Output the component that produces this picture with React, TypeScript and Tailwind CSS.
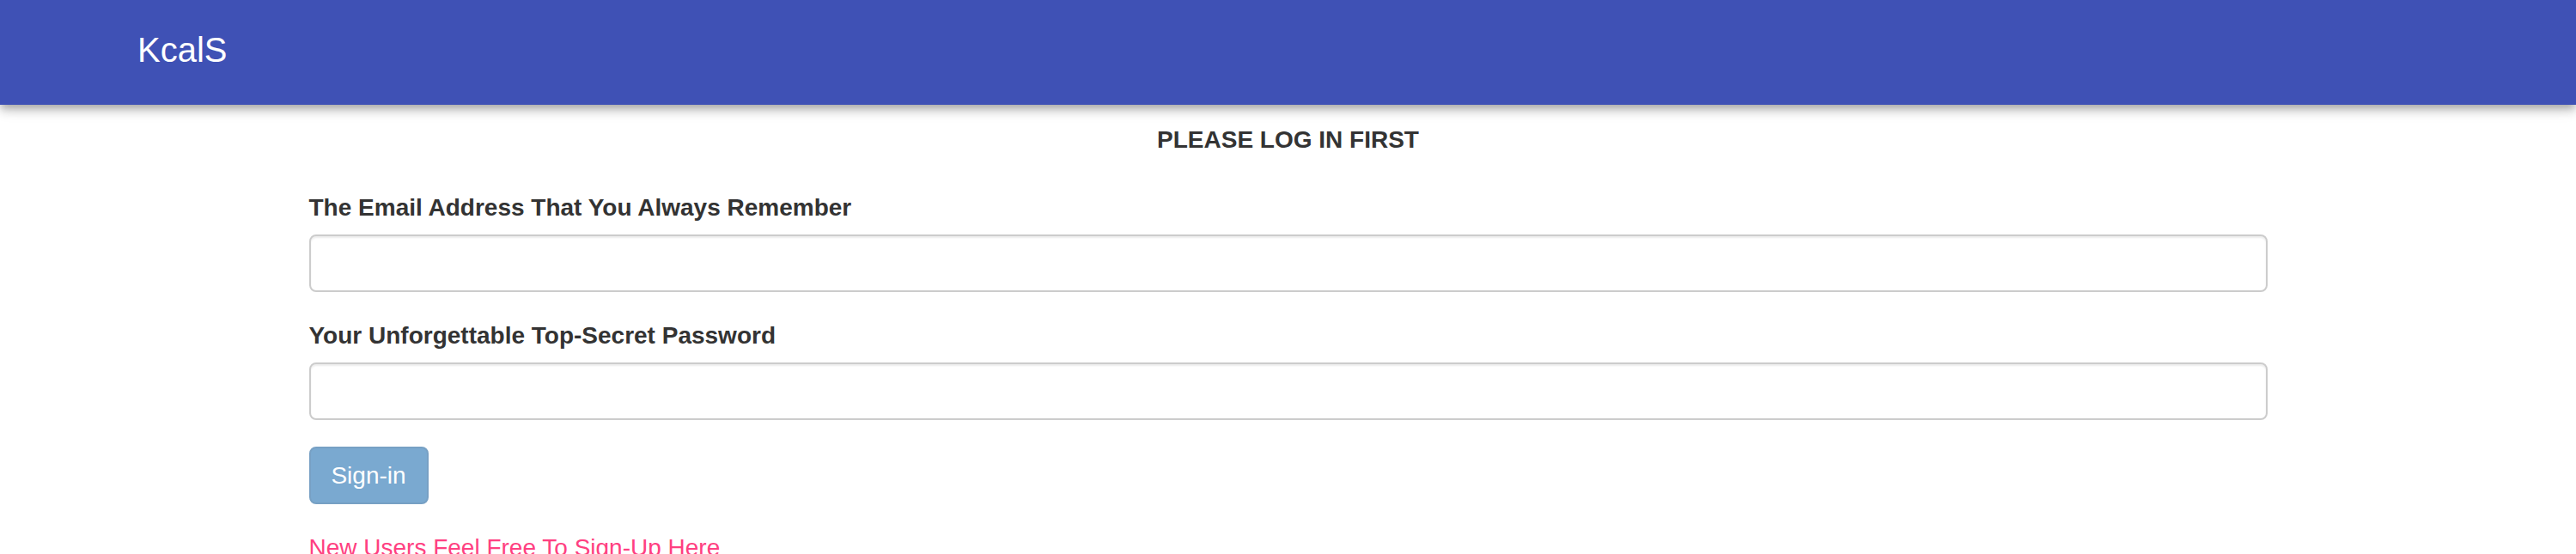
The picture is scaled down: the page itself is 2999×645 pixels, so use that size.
import React from "react";

export default function App() {
  return (
    <div
      className="min-h-[645px] bg-white text-[#333333]"
      style={{ fontFamily: '"Liberation Sans", Arial, Helvetica, sans-serif' }}
    >
      <header className="relative z-10 h-[122px] bg-[#3f51b5] pl-[160px] pt-[34px] shadow-[0_4px_8px_-2px_rgba(0,0,0,0.2),0_8px_10px_0_rgba(0,0,0,0.14),0_2px_20px_0_rgba(0,0,0,0.12)]">
        <span className="block text-[40px] leading-[48px] text-white">KcalS</span>
      </header>

      <main className="mx-auto w-[2280px] pt-[21px]">
        <h5 className="text-center text-[28px] font-bold leading-[40px] text-[#333333]">
          PLEASE LOG IN FIRST
        </h5>

        <form className="mt-[39px] flex flex-col">
          <div className="flex flex-col">
            <label className="mb-[11px] text-[28px] font-bold leading-[40px]">
              The Email Address That You Always Remember
            </label>
            <input
              type="email"
              className="h-[67px] w-full rounded-[8px] border-2 border-[#cccccc] bg-white px-[24px] text-[28px] shadow-[inset_0_2px_2px_rgba(0,0,0,0.075)] outline-none"
            />
          </div>

          <div className="mt-[31px] flex flex-col">
            <label className="mb-[11px] text-[28px] font-bold leading-[40px]">
              Your Unforgettable Top-Secret Password
            </label>
            <input
              type="password"
              className="h-[67px] w-full rounded-[8px] border-2 border-[#cccccc] bg-white px-[24px] text-[28px] shadow-[inset_0_2px_2px_rgba(0,0,0,0.075)] outline-none"
            />
          </div>

          <div className="mt-[31px]">
            <button
              type="button"
              disabled
              className="flex h-[67px] w-[139px] items-center justify-center rounded-[8px] border-2 border-[#77a0c4] bg-[#7aa9d0] text-[28px] leading-[40px] text-white"
            >
              Sign-in
            </button>
          </div>

          <div className="mt-[31px]">
            <a className="text-[28px] leading-[40px] text-[#ff4081]" href="#">
              New Users Feel Free To Sign-Up Here
            </a>
          </div>
        </form>
      </main>
    </div>
  );
}
